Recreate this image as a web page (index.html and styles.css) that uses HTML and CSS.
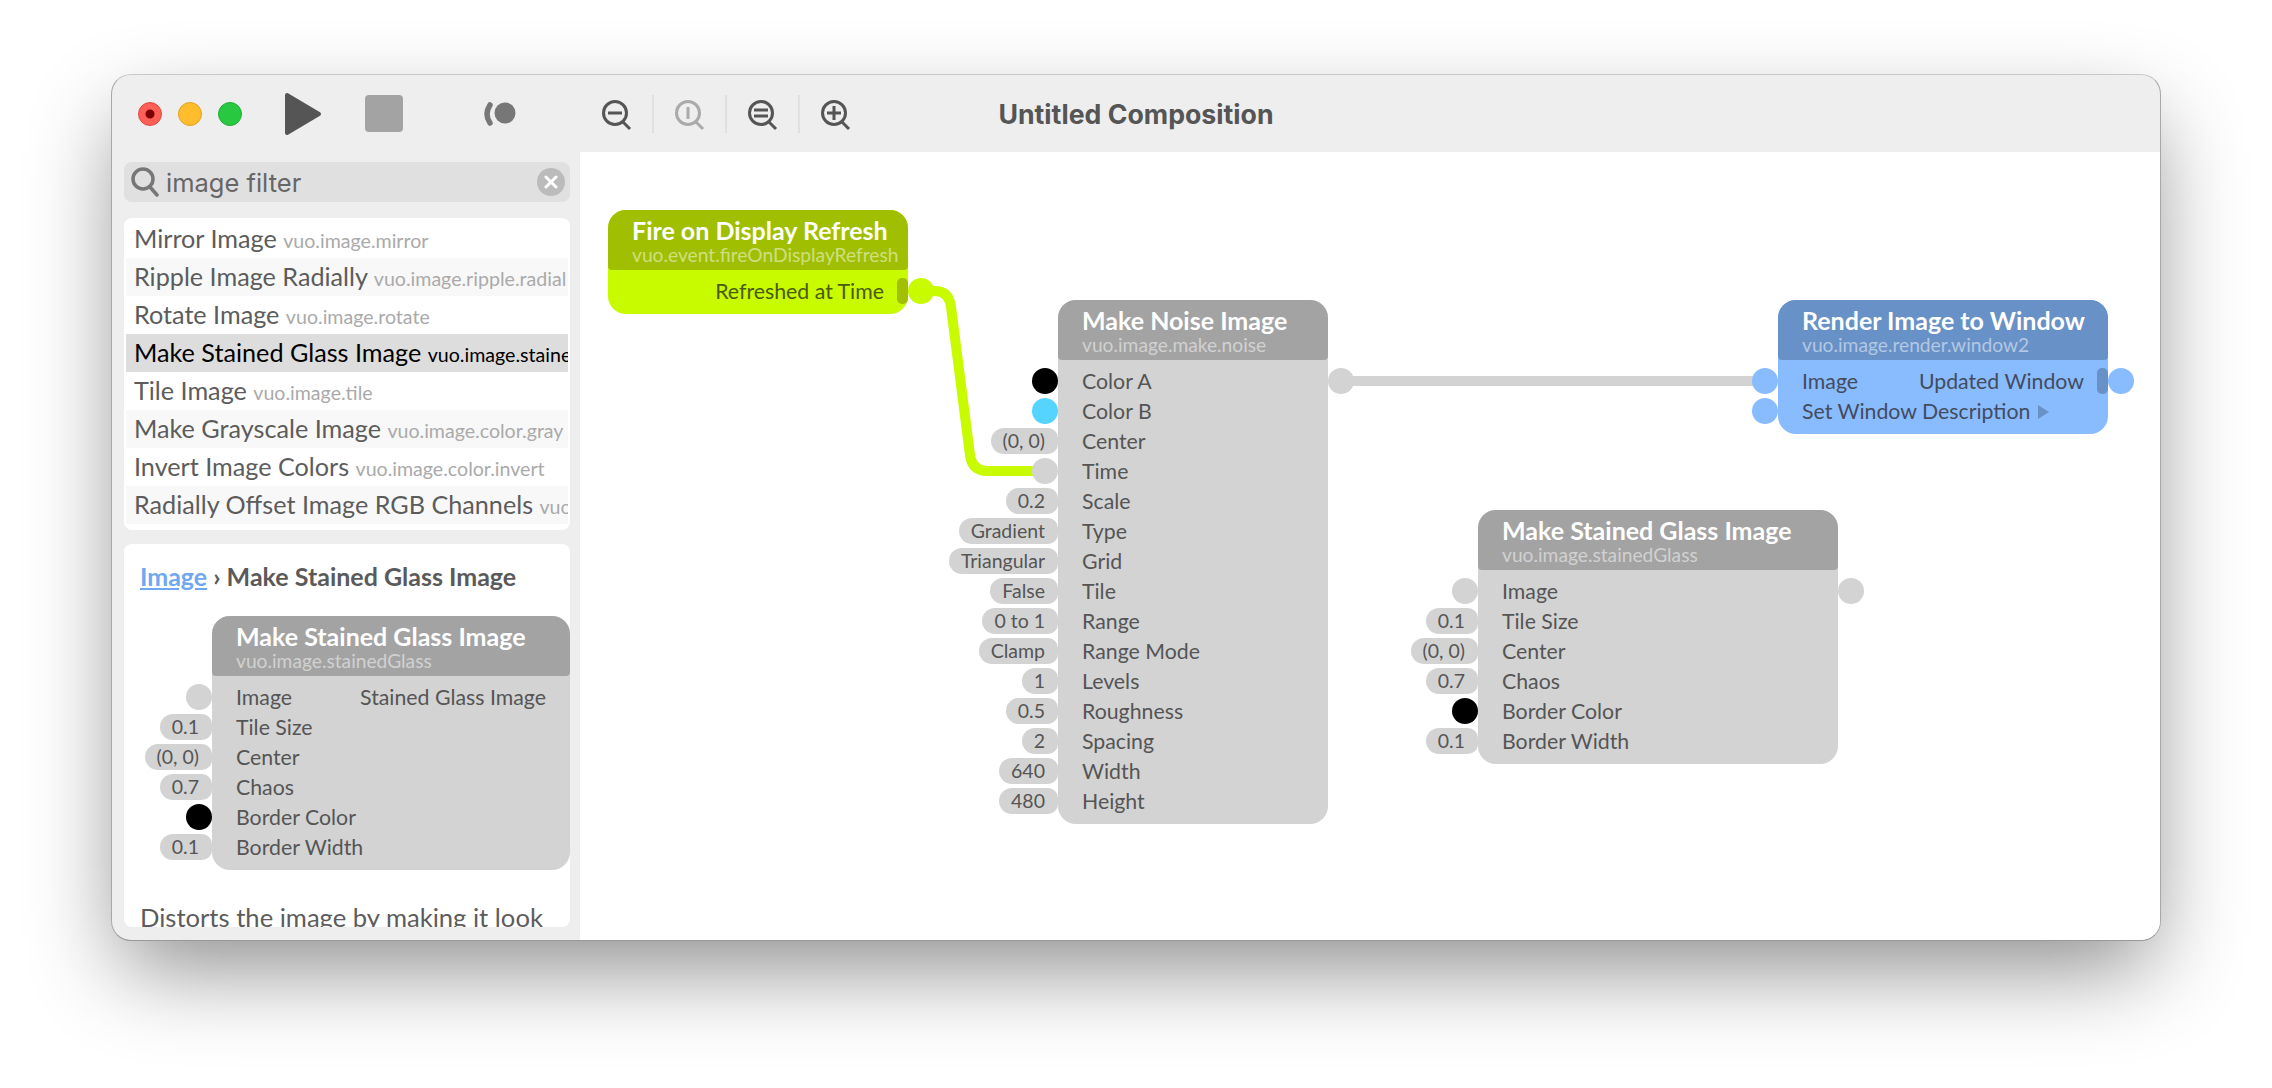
FILE: index.html
```html
<!DOCTYPE html>
<html lang="en">
<head>
<meta charset="UTF-8" />
<title>Untitled Composition</title>
<link rel="stylesheet" href="styles.css">
</head>
<body>

<div class="window">

  <div class="toolbar">
    <div class="tools">
      <div class="lights">
        <span class="light red"></span>
        <span class="light yellow"></span>
        <span class="light green"></span>
      </div>
      <svg class="tool-play" width="38" height="44" viewBox="0 0 38 44"><path d="M3 3 L35 22 L3 41 Z" fill="#555" stroke="#555" stroke-width="4" stroke-linejoin="round"/></svg>
      <span class="tool-stop"></span>
      <svg class="tool-record" width="32" height="26" viewBox="0 0 32 26"><circle cx="21" cy="12" r="10.5" fill="#777"/><path d="M6 4 Q0 13 6 22" fill="none" stroke="#777" stroke-width="5.5" stroke-linecap="round"/></svg>
      <div class="zooms">
        <svg width="30" height="32" viewBox="0 0 30 32"><circle cx="13" cy="13" r="11.5" fill="none" stroke="#555" stroke-width="3"/><path d="M21 22 L28 29" stroke="#555" stroke-width="3"/><path d="M6 13 H20" stroke="#555" stroke-width="3"/></svg>
        <span class="sep"></span>
        <svg width="30" height="32" viewBox="0 0 30 32"><circle cx="13" cy="13" r="11.5" fill="none" stroke="#aaa" stroke-width="3"/><path d="M21 22 L28 29" stroke="#aaa" stroke-width="3"/><path d="M13 7 V19" stroke="#aaa" stroke-width="3"/></svg>
        <span class="sep"></span>
        <svg width="30" height="32" viewBox="0 0 30 32"><circle cx="13" cy="13" r="11.5" fill="none" stroke="#555" stroke-width="3"/><path d="M21 22 L28 29" stroke="#555" stroke-width="3"/><path d="M6 10 H20 M6 16 H20" stroke="#555" stroke-width="3"/></svg>
        <span class="sep"></span>
        <svg width="30" height="32" viewBox="0 0 30 32"><circle cx="13" cy="13" r="11.5" fill="none" stroke="#555" stroke-width="3"/><path d="M21 22 L28 29" stroke="#555" stroke-width="3"/><path d="M6 13 H20 M13 6 V20" stroke="#555" stroke-width="3"/></svg>
      </div>
    </div>
    <div class="doc-title">Untitled Composition</div>
  </div>

  <div class="main">
    <div class="sidebar">
      <div class="search">
        <svg width="28" height="32" viewBox="0 0 28 32"><circle cx="12" cy="13" r="10" fill="none" stroke="#777" stroke-width="3.5"/><path d="M19 21 L26 29" stroke="#777" stroke-width="3.5" stroke-linecap="round"/></svg>
        <span class="search-text">image filter</span>
        <span class="search-clear"><svg width="14" height="14" viewBox="0 0 14 14"><path d="M2 2 L12 12 M12 2 L2 12" stroke="#fff" stroke-width="3" stroke-linecap="round"/></svg></span>
      </div>

      <div class="list">
        <div class="item">Mirror Image <small>vuo.image.mirror</small></div>
        <div class="item alt">Ripple Image Radially <small>vuo.image.ripple.radial</small></div>
        <div class="item">Rotate Image <small>vuo.image.rotate</small></div>
        <div class="item selected">Make Stained Glass Image <small>vuo.image.stainedGlass</small></div>
        <div class="item">Tile Image <small>vuo.image.tile</small></div>
        <div class="item alt">Make Grayscale Image <small>vuo.image.color.gray</small></div>
        <div class="item">Invert Image Colors <small>vuo.image.color.invert</small></div>
        <div class="item alt">Radially Offset Image RGB Channels <small>vuo.image.color.offset.radial</small></div>
      </div>

      <div class="docs">
        <h3><a href="#">Image</a> › Make Stained Glass Image</h3>
        <div class="node docs-node">
          <div class="node-head">
            <div class="node-title">Make Stained Glass Image</div>
            <div class="node-class">vuo.image.stainedGlass</div>
          </div>
          <div class="node-body">
            <div class="row"><span class="port"></span><span>Image</span><span>Stained Glass Image</span></div>
            <div class="row"><span class="pill">0.1</span><span>Tile Size</span></div>
            <div class="row"><span class="pill">(0, 0)</span><span>Center</span></div>
            <div class="row"><span class="pill">0.7</span><span>Chaos</span></div>
            <div class="row"><span class="port black"></span><span>Border Color</span></div>
            <div class="row"><span class="pill">0.1</span><span>Border Width</span></div>
          </div>
        </div>
        <p>Distorts the image by making it look like stained glass.</p>
      </div>
    </div>

    <div class="canvas">
      <svg class="cables" viewBox="580 152 1580 788" width="1580" height="788">
        <path d="M921 291 H935 Q949 291 951 307 L970 455 Q972 471 988 471 H1040" fill="none" stroke="#c8fa00" stroke-width="10"/>
        <path d="M1341 381 H1765" fill="none" stroke="#d3d3d3" stroke-width="10"/>
      </svg>

      <div class="node node-fire">
        <div class="node-head">
          <div class="node-title">Fire on Display Refresh</div>
          <div class="node-class">vuo.event.fireOnDisplayRefresh</div>
        </div>
        <div class="node-body">
          <div class="row row-end"><span>Refreshed at Time</span><span class="tab"></span><span class="port out"></span></div>
        </div>
      </div>

      <div class="node node-noise">
        <div class="node-head">
          <div class="node-title">Make Noise Image</div>
          <div class="node-class">vuo.image.make.noise</div>
        </div>
        <div class="node-body">
          <div class="row"><span class="port black"></span><span>Color A</span><span class="port out"></span></div>
          <div class="row"><span class="port cyan"></span><span>Color B</span></div>
          <div class="row"><span class="pill">(0, 0)</span><span>Center</span></div>
          <div class="row"><span class="port"></span><span>Time</span></div>
          <div class="row"><span class="pill">0.2</span><span>Scale</span></div>
          <div class="row"><span class="pill">Gradient</span><span>Type</span></div>
          <div class="row"><span class="pill">Triangular</span><span>Grid</span></div>
          <div class="row"><span class="pill">False</span><span>Tile</span></div>
          <div class="row"><span class="pill">0 to 1</span><span>Range</span></div>
          <div class="row"><span class="pill">Clamp</span><span>Range Mode</span></div>
          <div class="row"><span class="pill">1</span><span>Levels</span></div>
          <div class="row"><span class="pill">0.5</span><span>Roughness</span></div>
          <div class="row"><span class="pill">2</span><span>Spacing</span></div>
          <div class="row"><span class="pill">640</span><span>Width</span></div>
          <div class="row"><span class="pill">480</span><span>Height</span></div>
        </div>
      </div>

      <div class="node node-render">
        <div class="node-head">
          <div class="node-title">Render Image to Window</div>
          <div class="node-class">vuo.image.render.window2</div>
        </div>
        <div class="node-body">
          <div class="row"><span class="port"></span><span>Image</span><span>Updated Window</span><span class="tab"></span><span class="port out"></span></div>
          <div class="row"><span class="port"></span><span>Set Window Description <i class="arrow"></i></span></div>
        </div>
      </div>

      <div class="node node-glass">
        <div class="node-head">
          <div class="node-title">Make Stained Glass Image</div>
          <div class="node-class">vuo.image.stainedGlass</div>
        </div>
        <div class="node-body">
          <div class="row"><span class="port"></span><span>Image</span><span class="port out"></span></div>
          <div class="row"><span class="pill">0.1</span><span>Tile Size</span></div>
          <div class="row"><span class="pill">(0, 0)</span><span>Center</span></div>
          <div class="row"><span class="pill">0.7</span><span>Chaos</span></div>
          <div class="row"><span class="port black"></span><span>Border Color</span></div>
          <div class="row"><span class="pill">0.1</span><span>Border Width</span></div>
        </div>
      </div>
    </div>
  </div>
</div>

</body>
</html>
```

FILE: styles.css
```css
* {
  box-sizing: border-box;
}
body {
  margin: 0;
  padding-top: 74px;
  background: white;
  color: #555;
  font-family: Lato, "Noto Sans", sans-serif;
  overflow: hidden;
  height: 1088px;
}

/* window */
.window {
  margin-left: 111px;
  width: 2050px;
  height: 867px;
  background: #eee;
  border: 1px solid;
  border-color: #c8c8c8 #a8a8a8 #999 #a8a8a8;
  border-radius: 20px;
  box-shadow: 0 36px 90px -10px rgba(0, 0, 0, 0.46);
  display: flex;
  flex-direction: column;
  overflow: hidden;
}

/* toolbar */
.toolbar {
  height: 77px;
  flex: none;
  display: grid;
  grid-template-columns: 1fr auto 1fr;
  align-items: center;
}
.tools {
  display: flex;
  align-items: center;
  padding-left: 26px;
}
.lights {
  display: flex;
  gap: 16px;
}
.light {
  width: 24px;
  height: 24px;
  border-radius: 50%;
  display: block;
}
.light.red {
  background: radial-gradient(circle, #7d0000 0 4px, #ff5f57 5px);
  border: 1px solid #e0443e;
}
.light.yellow {
  background: #ffbd2e;
  border: 1px solid #dfa023;
}
.light.green {
  background: #28c840;
  border: 1px solid #1fae34;
}
.tool-play {
  margin-left: 42px;
}
.tool-stop {
  width: 38px;
  height: 37px;
  margin-left: 43px;
  border-radius: 4px;
  background: #a3a3a3;
}
.tool-record {
  margin-left: 81px;
}
.zooms {
  display: flex;
  align-items: center;
  margin-left: 86px;
}
.zooms svg {
  margin-top: 5px;
}
.sep {
  width: 2px;
  height: 38px;
  margin: 0 21px 0 20px;
  background: #e0e0e0;
}
.doc-title {
  font-family: Inter, sans-serif;
  font-size: 26.7px;
  font-weight: bold;
  color: #555;
}

.main {
  flex: 1;
  display: flex;
  min-height: 0;
}

/* sidebar */
.sidebar {
  width: 468px;
  flex: none;
  padding: 10px 10px 13px 12px;
  display: flex;
  flex-direction: column;
}
.search {
  height: 40px;
  flex: none;
  background: #e0e0e0;
  border-radius: 8px;
  display: flex;
  align-items: center;
  padding: 0 5px 0 7px;
}
.search-text {
  flex: 1;
  margin-left: 7px;
  font-family: Inter, sans-serif;
  font-size: 25.5px;
  color: #666;
}
.search-clear {
  width: 28px;
  height: 28px;
  border-radius: 50%;
  background: #bbb;
  display: flex;
  align-items: center;
  justify-content: center;
}
.list {
  margin-top: 16px;
  height: 312px;
  flex: none;
  background: white;
  border-radius: 8px;
  padding: 2px;
}
.item {
  height: 38px;
  line-height: 36px;
  padding-left: 8px;
  font-size: 25.2px;
  color: #5c5c5c;
  white-space: nowrap;
  overflow: hidden;
}
.item small {
  font-size: 19.6px;
  color: #aaa;
}
.item.alt {
  background: #f8f8f8;
}
.item.selected {
  background: #ddd;
  color: black;
}
.item.selected small {
  color: black;
}
.docs {
  margin-top: 14px;
  flex: 1;
  min-height: 0;
  background: white;
  border-radius: 8px;
  padding: 0 0 0 16px;
  overflow: hidden;
}
.docs h3 {
  margin: 17px 0 0;
  height: 36px;
  line-height: 30px;
  font-size: 25px;
  color: #5a5a5a;
}
.docs h3 a {
  color: #6fa8f0;
}
.docs p {
  margin: 29px 0 0;
  width: 416px;
  font-size: 25.6px;
  line-height: 36px;
  color: #5c5c5c;
}

/* nodes */
.canvas {
  flex: 1;
  position: relative;
  background: white;
  overflow: hidden;
}
.cables {
  position: absolute;
  top: 0;
  left: 0;
}
.node {
  position: absolute;
  background: #d3d3d3;
  border-radius: 18px;
  color: #555;
}
.node-head {
  height: 60px;
  padding: 5px 24px 0;
  background: #a3a3a3;
  border-radius: 18px 18px 4px 4px;
  white-space: nowrap;
}
.node-title {
  font-size: 25px;
  font-weight: bold;
  line-height: 31px;
  color: white;
}
.node-class {
  font-size: 19.2px;
  line-height: 17px;
  color: rgba(255, 255, 255, 0.5);
}
.node-body {
  padding: 6px 0 8px;
}
.row {
  position: relative;
  height: 30px;
  line-height: 30px;
  padding: 0 24px;
  font-size: 21.3px;
  display: flex;
  justify-content: space-between;
  white-space: nowrap;
}
.row-end {
  justify-content: flex-end;
}
.port {
  position: absolute;
  top: 2px;
  right: 100%;
  width: 26px;
  height: 26px;
  border-radius: 50%;
  background: #d3d3d3;
}
.port.out {
  right: auto;
  left: 100%;
}
.port.black {
  background: black;
}
.port.cyan {
  background: #55d4ff;
}
.pill {
  position: absolute;
  top: 2px;
  right: 100%;
  height: 26px;
  line-height: 26px;
  padding: 0 13px 0 12px;
  font-size: 19.5px;
  background: #d3d3d3;
  border-radius: 13px 10px 10px 13px;
}
.tab {
  position: absolute;
  top: 2px;
  right: 0;
  width: 11px;
  height: 26px;
  border-radius: 5px;
}
.arrow {
  display: inline-block;
  margin-left: 2px;
  border-left: 11px solid #6791c7;
  border-top: 7px solid transparent;
  border-bottom: 7px solid transparent;
}

.docs-node {
  position: static;
  width: 358px;
  margin: 19px 0 0 72px;
}

.node-fire {
  left: 28px;
  top: 58px;
  width: 300px;
  background: #c8fa00;
  color: #4a5a10;
}
.node-fire .node-head {
  background: #9fbf00;
}
.node-fire .port {
  background: #c8fa00;
}
.node-fire .tab {
  background: #a0c000;
}
.node-noise {
  left: 478px;
  top: 148px;
  width: 270px;
}
.node-render {
  left: 1198px;
  top: 148px;
  width: 330px;
  background: #89bbff;
  color: #434c5e;
}
.node-render .node-head {
  background: #6791c7;
}
.node-render .port {
  background: #89bbff;
}
.node-render .tab {
  background: #6791c7;
}
.node-glass {
  left: 898px;
  top: 358px;
  width: 360px;
}
```
